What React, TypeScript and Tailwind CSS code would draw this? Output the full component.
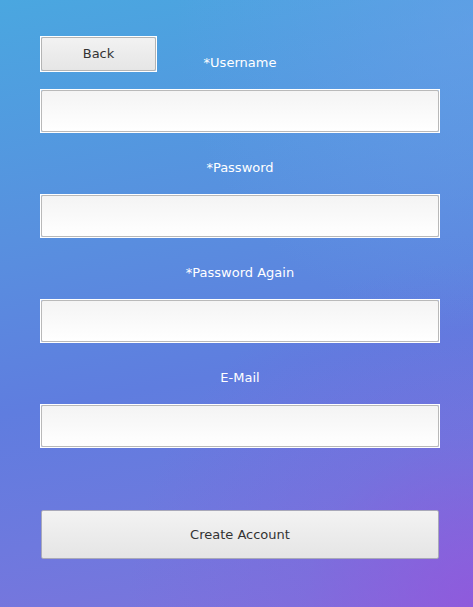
import React from 'react'

function Field({ label }: { label: string }) {
    return (
        <div className="flex flex-col items-center">
            <div className="h-[17px] text-[13px] leading-[17px] text-white">{label}</div>
            <div className="mt-[18px] w-[400px] h-[44px] border border-white bg-white/60">
                <input
                    className="block w-full h-full rounded-[2px] border border-[#b9b9b9] bg-gradient-to-b from-[#f4f4f4] to-[#ffffff] outline-none px-2 text-[13px]"
                />
            </div>
        </div>
    )
}

export default function App() {
    return (
        <div
            className="relative w-[473px] h-[607px] overflow-hidden bg-[linear-gradient(170deg,#4aa7e0_0%,#5890df_35%,#5f7ddf_60%,#6e79de_80%,#7f72dc_100%)]"
            style={{ fontFamily: '"DejaVu Sans", "Liberation Sans", sans-serif' }}
        >
            <div className="absolute inset-0 bg-[radial-gradient(circle_at_100%_100%,rgba(150,80,220,0.7)_0%,rgba(140,90,220,0.25)_22%,rgba(120,100,220,0)_45%)]" />
            <div className="absolute inset-0 bg-[radial-gradient(circle_at_100%_5%,rgba(110,160,235,0.5)_0%,rgba(110,160,235,0)_40%)]" />
            <div className="relative flex flex-col pl-[40px] pt-[36px]">
                <div className="flex items-start">
                    <button className="w-[117px] h-[36px] border border-white bg-white/60">
                        <div className="h-full rounded-[2px] border border-[#b4b4b4] bg-gradient-to-b from-[#f2f2f2] to-[#e6e6e6] flex items-center justify-center text-[13px] text-[#333]">
                            Back
                        </div>
                    </button>
                </div>
                <div className="-mt-[18px] flex flex-col gap-[26px] w-[400px]">
                    <Field label="*Username" />
                    <Field label="*Password" />
                    <Field label="*Password Again" />
                    <Field label="E-Mail" />
                </div>
                <button className="mt-[62px] ml-[1px] w-[398px] h-[49px] rounded-[2px] border border-[#a9a9b9] bg-gradient-to-b from-[#f3f3f3] to-[#e5e5e5] text-[13px] text-[#333]">
                    Create Account
                </button>
            </div>
        </div>
    )
}
